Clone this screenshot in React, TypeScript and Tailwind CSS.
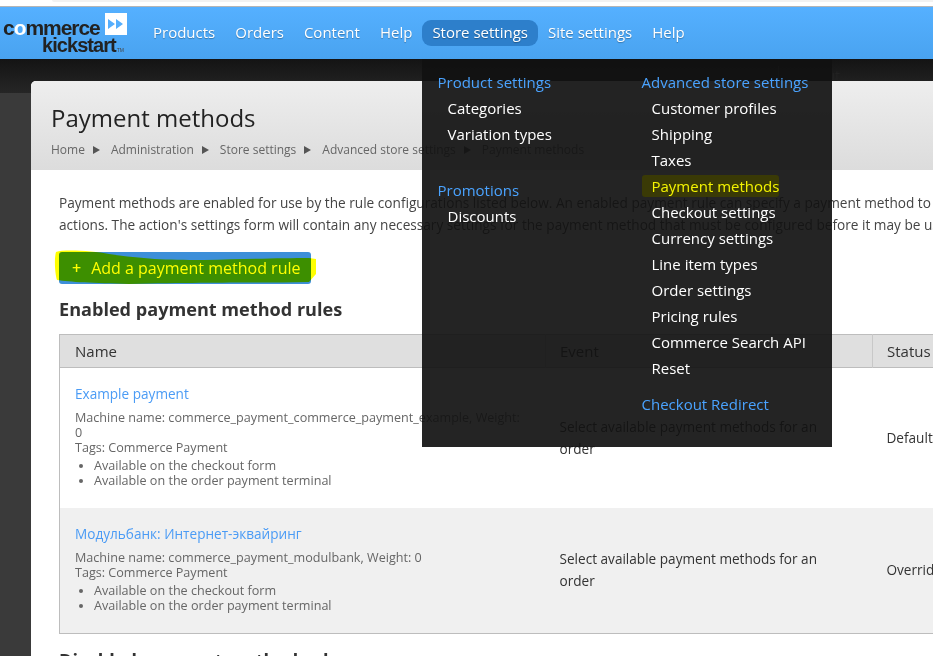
const openSans = { fontFamily: '"Open Sans", sans-serif' };

function Logo() {
  return (
    <div className="w-[136px] h-[52px] pl-[3px] flex flex-col shrink-0" style={{ fontFamily: '"Liberation Sans", sans-serif' }}>
      <div className="flex items-start h-[30px]">
        <span className="text-[21px] font-bold leading-[20px] mt-[11px] tracking-[-1.05px] text-[#222]">
          c<span className="text-white">o</span>mmerce
        </span>
        <div className="w-[22px] h-[22px] bg-white ml-[5px] mt-[6px] flex items-center justify-center">
          <svg width="18" height="12" viewBox="0 0 18 12">
            <path d="M1 1l7 5-7 5zM9 1l7 5-7 5z" fill="#55aefc" />
          </svg>
        </div>
      </div>
      <div className="flex items-end pl-[39px] h-[16px]">
        <span className="text-[20px] font-bold leading-[16px] tracking-[-0.95px] text-[#222]">kickstart</span>
        <span className="text-[5px] leading-[6px] text-[#444] ml-[1px]">TM</span>
      </div>
    </div>
  );
}

function NavItem({ label, active }: { label: string; active?: boolean }) {
  return (
    <a
      className={
        active
          ? "px-[10px] h-[26px] flex items-center rounded-[9px] bg-[#2d7fcb] text-[15px] text-white [text-shadow:0_1px_1px_rgba(0,0,0,0.3)]"
          : "px-[10px] h-[26px] flex items-center text-[15px] text-white [text-shadow:0_1px_1px_rgba(0,0,0,0.3)]"
      }
    >
      {label}
    </a>
  );
}

function MenuHead({ label, className }: { label: string; className?: string }) {
  return <div className={"h-[26px] leading-[26px] text-[15px] text-[#4aa3ff] " + (className ?? "")}>{label}</div>;
}

function MenuItem({ label, hi }: { label: string; hi?: boolean }) {
  return (
    <div className="h-[26px] leading-[26px] text-[15px] text-white pl-[10px]">
      {hi ? <span className="inline-block h-[22px] leading-[22px] -ml-[10px] pl-[10px] bg-[#3a3a06] rounded-[3px] text-[#f4f400]">{label}</span> : label}
    </div>
  );
}

function Dropdown() {
  return (
    <div className="absolute left-[422px] top-[59px] w-[410px] h-[388px] bg-[rgba(17,17,17,0.92)] pt-[10px] pl-[15.5px] flex z-10">
      <div className="w-[204px]">
        <MenuHead label="Product settings" />
        <MenuItem label="Categories" />
        <MenuItem label="Variation types" />
        <MenuHead label="Promotions" className="mt-[30px]" />
        <MenuItem label="Discounts" />
      </div>
      <div>
        <MenuHead label="Advanced store settings" />
        {["Customer profiles", "Shipping", "Taxes"].map((l) => (
          <MenuItem key={l} label={l} />
        ))}
        <MenuItem label="Payment methods" hi />
        {["Checkout settings", "Currency settings", "Line item types", "Order settings", "Pricing rules", "Commerce Search API", "Reset"].map((l) => (
          <MenuItem key={l} label={l} />
        ))}
        <MenuHead label="Checkout Redirect" className="mt-[10px]" />
      </div>
    </div>
  );
}

function Crumb({ label, last }: { label: string; last?: boolean }) {
  return (
    <>
      <span>{label}</span>
      {!last && (
        <svg width="7" height="8" viewBox="0 0 7 8" className="ml-[8px] mr-[11px]">
          <path d="M0 0l7 4-7 4z" fill="#555" />
        </svg>
      )}
    </>
  );
}

function Row({ name, machine, status, shaded }: { name: string; machine: string; status: string; shaded?: boolean }) {
  return (
    <tr className={shaded ? "bg-[#f0f0f0]" : "bg-white"}>
      <td className={shaded ? "h-[126px] pl-[15px] pr-[25px] pb-[3px] align-middle" : "h-[140px] pl-[15px] pr-[25px] pb-[4px] align-middle"}>
        <a className="block text-[13.6px] leading-[20px] text-[#4a9bf5]">{name}</a>
        <div className="text-[12.6px] leading-[15px] text-[#666] mt-[6px]">
          <div>{machine}</div>
          <div>Tags: Commerce Payment</div>
          <ul className="list-disc pl-[19px] mt-[3px] marker:text-[#666]">
            <li>Available on the checkout form</li>
            <li>Available on the order payment terminal</li>
          </ul>
        </div>
      </td>
      <td className="pl-[14px] pr-[45px] text-[13.6px] leading-[22px] text-[#333] align-middle">
        Select available payment methods for an order
      </td>
      <td className="px-[14px] text-[13.6px] text-[#333] align-middle whitespace-nowrap">{status}</td>
    </tr>
  );
}

export default function App() {
  return (
    <div className="relative w-[933px] h-[656px] overflow-hidden bg-white flex flex-col" style={openSans}>
      <div className="h-[7px] shrink-0 bg-white border-b border-[#b5b5b5]">
        <div className="ml-[52px] h-[2px] bg-[#f2f2f2] rounded-bl-[3px]" />
      </div>
      <header className="h-[52px] shrink-0 flex bg-gradient-to-b from-[#55b0ff] to-[#49a3f0]">
        <Logo />
        <nav className="flex items-center pl-[7px] pb-[1px]">
          <NavItem label="Products" />
          <NavItem label="Orders" />
          <NavItem label="Content" />
          <NavItem label="Help" />
          <NavItem label="Store settings" active />
          <NavItem label="Site settings" />
          <NavItem label="Help" />
        </nav>
      </header>
      <div className="flex-1 relative bg-[#3a3a3a] min-h-0">
        <div className="h-[34px] bg-gradient-to-b from-[#141414] to-[#262626] flex justify-end">
          <div className="text-[14px] text-[#222] leading-[33px] pr-[93px]">
            <span className="pr-[12px] mr-[12px] border-r border-[#333]">Hello, admin</span>Log out
          </div>
        </div>
      </div>
      <main className="absolute left-[31px] top-[81px] w-[1100px] h-[620px] rounded-t-[5px] bg-white overflow-hidden">
        <div className="h-[89px] bg-gradient-to-b from-[#eeeeee] to-[#dcdcdc] pl-[20px] pt-[19px]">
          <h1 className="text-[24px] leading-[35px] text-[#222]">Payment methods</h1>
          <div className="flex items-center text-[12px] text-[#666] leading-[16px] mt-[7px]">
            <Crumb label="Home" />
            <Crumb label="Administration" />
            <Crumb label="Store settings" />
            <Crumb label="Advanced store settings" />
            <Crumb label="Payment methods" last />
          </div>
        </div>
        <div className="pl-[28px] pt-[22px]">
          <p className="text-[13.65px] leading-[22px] text-[#444] whitespace-nowrap">
            Payment methods are enabled for use by the rule configurations listed below. An enabled payment rule can specify a payment method to use on the checkout form through its
            <br />
            actions. The action's settings form will contain any necessary settings for the payment method that must be configured before it may be used.
          </p>
          <div className="relative mt-[16px] w-[252px] h-[32px]">
            <a className="w-[252px] h-[32px] flex items-center rounded-[3px] bg-[#3d8fd9] text-[16px] text-white pl-[13px]">
              <span className="mr-[10px] font-semibold">+</span>Add a payment method rule
            </a>
            <svg className="absolute left-[-5px] top-[-3px] mix-blend-multiply pointer-events-none" width="264" height="38" viewBox="0 0 264 38">
              <path d="M2 3C10 0 40 2 55 5C90 10 110 11 150 11C190 10 230 9 255 9L262 10L262 25L255 33C210 34 160 33 75 35C40 34 15 33 3 31C1 25 0 10 2 3z" fill="#ffff00" />
            </svg>
          </div>
          <h2 className="text-[18.1px] font-bold leading-[24px] text-[#333] mt-[13px]">Enabled payment method rules</h2>
          <table className="mt-[13px] w-[1000px] table-fixed border-collapse border border-[#bdbdbd]">
            <colgroup>
              <col className="w-[486px]" />
              <col className="w-[327px]" />
              <col />
            </colgroup>
            <thead>
              <tr className="bg-[#dfdfdf] h-[33px] border-b border-[#bdbdbd]">
                <th className="text-left font-normal text-[15px] text-[#333] pl-[15px] pt-[1px]">Name</th>
                <th className="text-left font-normal text-[15px] text-[#333] pl-[14px] pt-[1px] border-l border-[#c8c8c8]">Event</th>
                <th className="text-left font-normal text-[15px] text-[#333] pl-[14px] pt-[1px] border-l border-[#c8c8c8]">Status</th>
              </tr>
            </thead>
            <tbody>
              <Row name="Example payment" machine="Machine name: commerce_payment_commerce_payment_example, Weight: 0" status="Default" />
              <Row name="Модульбанк: Интернет-эквайринг" machine="Machine name: commerce_payment_modulbank, Weight: 0" status="Overridden" shaded />
            </tbody>
          </table>
          <h2 className="text-[18.1px] font-bold leading-[24px] text-[#333] mt-[14px]">Disabled payment method rules</h2>
        </div>
      </main>
      <Dropdown />
    </div>
  );
}
